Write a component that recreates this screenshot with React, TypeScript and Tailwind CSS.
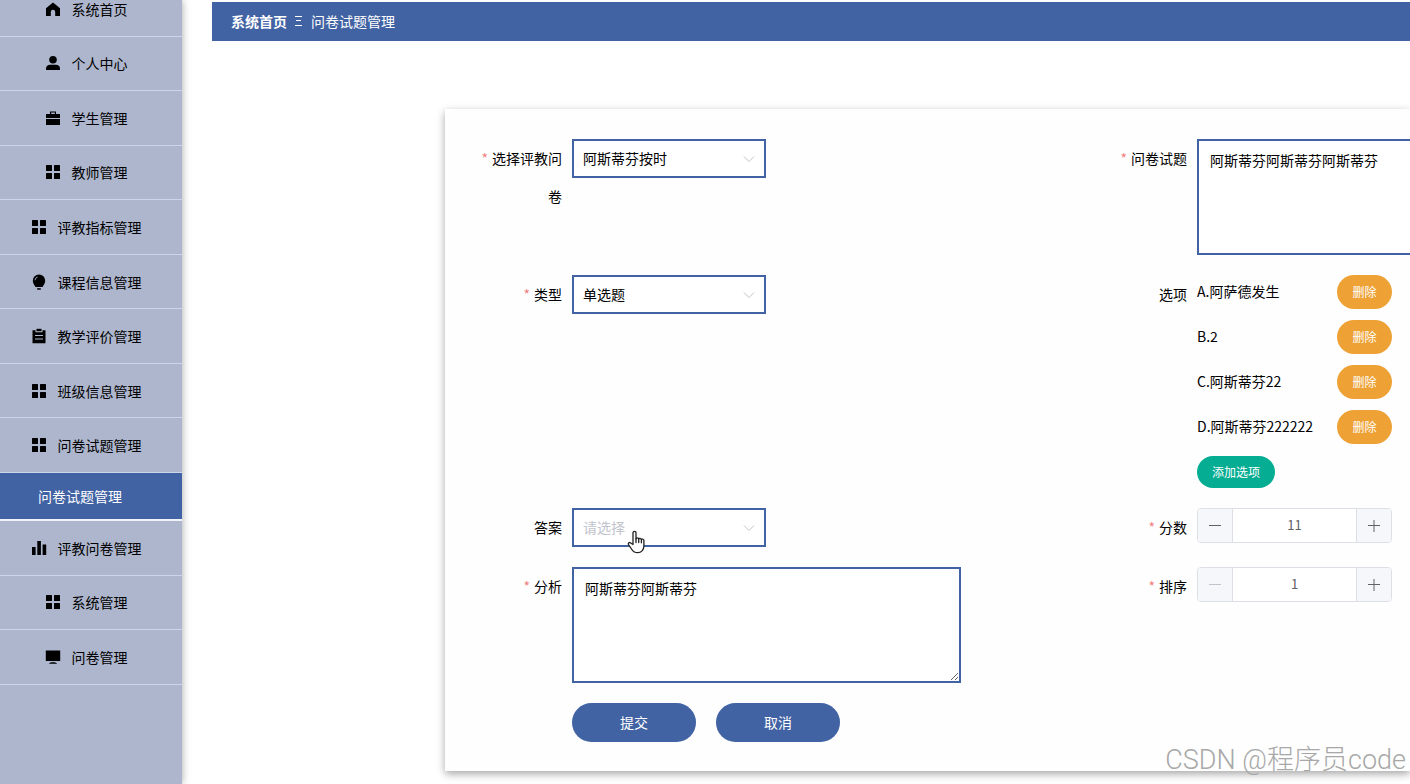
import { useState } from 'react';
import type { ReactNode } from 'react';

// 侧边栏图标
const icons: Record<string, ReactNode> = {
  home: <path d="M8 1.4 15 7.2V15H10.2V11a2.2 2.2 0 0 0-4.4 0V15H1V7.2Z" />,
  user: (
    <>
      <circle cx="8" cy="4.8" r="3.8" />
      <path d="M1 15v-1.600C1 11 3 9.800 5 9.800h6c2 0 4 1.200 4 3.600V15Z" />
    </>
  ),
  briefcase: (
    <>
      <path d="M5 4V1.500h6V4h-1.200V2.600H6.200V4Z" />
      <path d="M1 4h14v4H1Z" />
      <path d="M1 9h14v6H1Z" />
    </>
  ),
  menu: (
    <>
      <rect x="1" y="1" width="6" height="6" rx="0.5" />
      <rect x="9" y="1" width="6" height="6" rx="0.5" />
      <rect x="1" y="9" width="6" height="6" rx="0.5" />
      <rect x="9" y="9" width="6" height="6" rx="0.5" />
    </>
  ),
  bulb: (
    <>
      <path d="M8 .5a6.200 6.200 0 0 0-6.200 6.200c0 2.500 1.500 4.200 2.700 6.300h7c1.200-2.100 2.700-3.800 2.700-6.300A6.200 6.200 0 0 0 8 .5Z" />
      <path d="M6.200 14.200h3.600v1.500H6.200Z" />
      <path d="M4 6.200A3.600 3.600 0 0 1 6.600 3" fill="none" stroke="#adb6cd" strokeWidth="0.9" />
    </>
  ),
  order: (
    <>
      <path d="M5.500 .8h5v2.400h-5Z" />
      <path d="M1.500 2.200h3V4.200h7V2.200h3V15.200h-13Z" />
      <path d="M4 7.500h8M4 11h8" stroke="#adb6cd" strokeWidth="1.200" />
    </>
  ),
  data: (
    <>
      <rect x="1" y="7" width="3.600" height="8" />
      <rect x="6.300" y="1" width="3.600" height="14" />
      <rect x="11.600" y="4.500" width="3.600" height="10.500" />
    </>
  ),
  platform: (
    <>
      <path d="M.8 1.500h14.400v10.500H.8Z" />
      <path d="M4 14.800c0-1 1.500-1.600 4-1.600s4 .6 4 1.600Z" />
    </>
  ),
};

const topMenus = [
  { icon: 'home', name: '系统首页' },
  { icon: 'user', name: '个人中心' },
  { icon: 'briefcase', name: '学生管理' },
  { icon: 'menu', name: '教师管理' },
  { icon: 'menu', name: '评教指标管理' },
  { icon: 'bulb', name: '课程信息管理' },
  { icon: 'order', name: '教学评价管理' },
  { icon: 'menu', name: '班级信息管理' },
  { icon: 'menu', name: '问卷试题管理' },
];

const bottomMenus = [
  { icon: 'data', name: '评教问卷管理' },
  { icon: 'menu', name: '系统管理' },
  { icon: 'platform', name: '问卷管理' },
];

const MenuItem = ({ icon, name }: { icon: string; name: string }) => (
  <li className="border-b border-[#cdd6e8]">
    <a href="#" className="flex h-full items-center justify-center gap-[11px] pr-2.5 text-black">
      <svg className="h-4 w-4" viewBox="0 0 16 16" fill="currentColor">{icons[icon]}</svg>
      {name}
    </a>
  </li>
);

type FieldProps = { id: string; label: string; required?: boolean; children: ReactNode };

const Field = ({ id, label, required, children }: FieldProps) => (
  <div className="flex items-start">
    <label htmlFor={id} className="w-[97px] shrink-0 pr-2.5 text-right leading-[38px]">
      {required && <span className="mr-1 text-[#f08080]">*</span>}
      {label}
    </label>
    {children}
  </div>
);

const SelectBox = ({ id, options, placeholder }: { id: string; options: string[]; placeholder?: string }) => {
  const [value, setValue] = useState(placeholder ? '' : options[0]);
  return (
    <div className="relative w-[194px]">
      <select
        id={id}
        value={value}
        onChange={e => setValue(e.target.value)}
        className={`block h-[39px] w-full appearance-none border-2 border-[#4162a3] bg-white pr-8 pb-0.5 pl-[9px] focus:outline-none ${value ? 'text-black' : 'text-[#c0c4cc]'}`}
      >
        {placeholder && <option value="">{placeholder}</option>}
        {options.map(o => <option key={o} value={o}>{o}</option>)}
      </select>
      <svg className="pointer-events-none absolute top-3.5 right-[11px] h-3 w-3" viewBox="0 0 12 12" fill="none" stroke="#c0c4cc">
        <path d="M1 3.500 6 8.500 11 3.500" />
      </svg>
    </div>
  );
};

const NumberBox = ({ id, initial }: { id: string; initial: number }) => {
  const [value, setValue] = useState(initial);
  return (
    <div className="flex h-[35px] w-[195px] overflow-hidden rounded border border-[#dcdfe6] bg-white text-[#606266]">
      <button
        type="button"
        aria-label="减少"
        disabled={value <= 1}
        onClick={() => setValue(value - 1)}
        className="flex w-[35px] shrink-0 items-center justify-center border-r border-[#dcdfe6] bg-[#f5f7fa] disabled:text-[#c0c4cc]"
      >
        <svg className="h-3 w-3" viewBox="0 0 12 12" stroke="currentColor"><path d="M0 5.500h12" /></svg>
      </button>
      <input
        id={id}
        type="text"
        value={value}
        onChange={e => setValue(Number(e.target.value) || 1)}
        className="w-full min-w-0 text-center text-[13px] focus:outline-none"
      />
      <button
        type="button"
        aria-label="增加"
        onClick={() => setValue(value + 1)}
        className="flex w-[35px] shrink-0 items-center justify-center border-l border-[#dcdfe6] bg-[#f5f7fa]"
      >
        <svg className="h-3 w-3" viewBox="0 0 12 12" stroke="currentColor"><path d="M0 5.500h12M6 0v12" /></svg>
      </button>
    </div>
  );
};

const App = () => {
  const [options, setOptions] = useState(['A.阿萨德发生', 'B.2', 'C.阿斯蒂芬22', 'D.阿斯蒂芬222222']);

  return (
    <div className="relative flex h-screen overflow-hidden bg-[#fefffe] font-['Noto_Sans_CJK_SC',sans-serif] text-sm text-black">
      {/* 左侧菜单 */}
      <aside className="w-[182px] shrink-0 bg-[#adb6cd] shadow-[0_0_8px_rgba(0,0,0,0.35)]">
        <nav className="-mt-[18px]">
          <ul className="grid h-[491px] auto-rows-fr">
            {topMenus.map(m => <MenuItem key={m.name} {...m} />)}
          </ul>
          <a href="#" className="flex h-12 items-center justify-center border-b-2 border-[#f0f4fa] bg-[#4162a3] pr-[22px] text-white">
            问卷试题管理
          </a>
          <ul className="grid h-[164px] auto-rows-fr">
            {bottomMenus.map(m => <MenuItem key={m.name} {...m} />)}
          </ul>
        </nav>
      </aside>

      <main className="min-w-0 grow overflow-hidden pt-0.5 pl-[30px]">
        <div className="flex h-[39px] items-center gap-2 bg-[#4162a3] pb-0.5 pl-[19px] text-white">
          <a href="#" className="font-bold">系统首页</a>
          <svg className="h-3 w-2" viewBox="0 0 8 12" fill="none" stroke="currentColor">
            <path d="M0 1.500h7M1 5.500h5M0 10.500h7" />
          </svg>
          <span>问卷试题管理</span>
        </div>

        {/* 表单 */}
        <form
          onSubmit={e => e.preventDefault()}
          className="mt-[68px] ml-[233px] grid grid-cols-[625px_1fr] gap-y-5 bg-[#fefefe] pt-[30px] pb-[29px] pl-[30px] shadow-[0_3px_8px_rgba(0,0,0,0.35)]"
        >
          <Field id="paper" label="选择评教问卷" required>
            <SelectBox id="paper" options={['阿斯蒂芬按时']} />
          </Field>
          <Field id="question" label="问卷试题" required>
            <textarea
              id="question"
              defaultValue="阿斯蒂芬阿斯蒂芬阿斯蒂芬"
              className="h-[116px] w-[389px] shrink-0 border-2 border-[#4162a3] bg-white px-[11px] py-[9px] focus:outline-none"
            />
          </Field>

          <Field id="type" label="类型" required>
            <SelectBox id="type" options={['单选题', '多选题', '判断题', '填空题']} />
          </Field>
          <Field id="addOption" label="选项">
            <div>
              <ul className="flex flex-col gap-2.5">
                {options.map(o => (
                  <li key={o} className="flex h-[35px] items-start">
                    <span className="w-[140px] leading-8">{o}</span>
                    <button
                      type="button"
                      onClick={() => setOptions(options.filter(i => i !== o))}
                      className="h-[34px] w-[55px] rounded-full bg-[#eea236] text-xs text-white"
                    >
                      删除
                    </button>
                  </li>
                ))}
              </ul>
              <button id="addOption" type="button" className="mt-[11px] block h-8 w-[78px] rounded-full bg-[#05ad92] text-xs text-white">
                添加选项
              </button>
            </div>
          </Field>

          <Field id="answer" label="答案">
            <SelectBox id="answer" placeholder="请选择" options={['A', 'B', 'C', 'D']} />
          </Field>
          <Field id="score" label="分数" required>
            <NumberBox id="score" initial={11} />
          </Field>

          <Field id="analysis" label="分析" required>
            <textarea
              id="analysis"
              defaultValue="阿斯蒂芬阿斯蒂芬"
              className="h-[116px] w-[389px] border-2 border-[#4162a3] bg-white px-[11px] py-[9px] focus:outline-none"
            />
          </Field>
          <Field id="sort" label="排序" required>
            <NumberBox id="sort" initial={1} />
          </Field>

          <div className="col-span-2 flex gap-5 pl-[97px]">
            <button type="submit" className="h-[39px] w-[124px] rounded-full bg-[#4162a3] pb-0.5 text-white">提交</button>
            <button type="button" className="h-[39px] w-[124px] rounded-full bg-[#4162a3] pb-0.5 text-white">取消</button>
          </div>
        </form>
      </main>

      {/* 鼠标指针 */}
      <svg className="pointer-events-none absolute top-[530px] left-[627px] h-6 w-[19px]" viewBox="0 0 19 24" fill="#fff" stroke="#222" strokeWidth="1.300" strokeLinejoin="round" strokeLinecap="round">
        <path d="M6 14.500V2.800C6 .9 9 .9 9 2.800V9c0-1.500 2.700-1.500 2.700.3 0-1.400 2.700-1.300 2.700.5 0-1.200 2.500-1 2.500.7v5.500c0 4-2.700 6.700-6.200 6.700-3.200 0-5-1.500-6.200-3.700L1.500 14.600c-.8-1.500.8-2.700 2.200-1.600Z" />
        <path d="M9 9v3.500M11.700 9.300v3.200M14.400 9.800v3" fill="none" />
      </svg>

      <div className="pointer-events-none absolute right-1 bottom-1 font-['Roboto','Noto_Sans_CJK_SC',sans-serif] text-[27px] leading-10 font-light text-[#a8a8a8]">
        CSDN @程序员code
      </div>
    </div>
  );
};

export default App;
